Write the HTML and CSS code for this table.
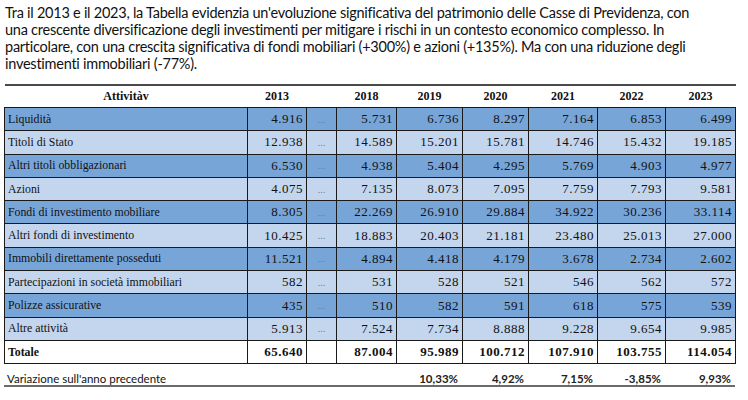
FILE: index.html
```html
<!DOCTYPE html>
<html lang="it">
<head>
<meta charset="utf-8">
<title>Casse di Previdenza</title>
<link rel="stylesheet" href="styles.css">
</head>
<body>
<div class="page">
  <p class="intro">Tra il 2013 e il 2023, la Tabella evidenzia un'evoluzione significativa del patrimonio delle Casse di Previdenza, con una crescente diversificazione degli investimenti per mitigare i rischi in un contesto economico complesso. In particolare, con una crescita significativa di fondi mobiliari (+300%) e azioni (+135%). Ma con una riduzione degli investimenti immobiliari (-77%).</p>
  <table class="data">
    <colgroup>
      <col class="c-label"><col class="c-2013"><col class="c-dots"><col class="c-2018"><col class="c-2019"><col class="c-2020"><col class="c-2021"><col class="c-2022"><col class="c-2023">
    </colgroup>
    <thead>
      <tr><th>Attivitàv</th><th>2013</th><th></th><th>2018</th><th>2019</th><th>2020</th><th>2021</th><th>2022</th><th>2023</th></tr>
    </thead>
    <tbody>
      <tr class="dark"><td>Liquidità</td><td>4.916</td><td class="dots">...</td><td>5.731</td><td>6.736</td><td>8.297</td><td>7.164</td><td>6.853</td><td>6.499</td></tr>
      <tr class="light"><td>Titoli di Stato</td><td>12.938</td><td class="dots">...</td><td>14.589</td><td>15.201</td><td>15.781</td><td>14.746</td><td>15.432</td><td>19.185</td></tr>
      <tr class="dark"><td>Altri titoli obbligazionari</td><td>6.530</td><td class="dots">...</td><td>4.938</td><td>5.404</td><td>4.295</td><td>5.769</td><td>4.903</td><td>4.977</td></tr>
      <tr class="light"><td>Azioni</td><td>4.075</td><td class="dots">...</td><td>7.135</td><td>8.073</td><td>7.095</td><td>7.759</td><td>7.793</td><td>9.581</td></tr>
      <tr class="dark"><td>Fondi di investimento mobiliare</td><td>8.305</td><td class="dots">...</td><td>22.269</td><td>26.910</td><td>29.884</td><td>34.922</td><td>30.236</td><td>33.114</td></tr>
      <tr class="light"><td>Altri fondi di investimento</td><td>10.425</td><td class="dots">...</td><td>18.883</td><td>20.403</td><td>21.181</td><td>23.480</td><td>25.013</td><td>27.000</td></tr>
      <tr class="dark"><td>Immobili direttamente posseduti</td><td>11.521</td><td class="dots">...</td><td>4.894</td><td>4.418</td><td>4.179</td><td>3.678</td><td>2.734</td><td>2.602</td></tr>
      <tr class="light"><td>Partecipazioni in società immobiliari</td><td>582</td><td class="dots">...</td><td>531</td><td>528</td><td>521</td><td>546</td><td>562</td><td>572</td></tr>
      <tr class="dark"><td>Polizze assicurative</td><td>435</td><td class="dots">...</td><td>510</td><td>582</td><td>591</td><td>618</td><td>575</td><td>539</td></tr>
      <tr class="light"><td>Altre attività</td><td>5.913</td><td class="dots">...</td><td>7.524</td><td>7.734</td><td>8.888</td><td>9.228</td><td>9.654</td><td>9.985</td></tr>
      <tr class="total"><td>Totale</td><td>65.640</td><td class="dots"></td><td>87.004</td><td>95.989</td><td>100.712</td><td>107.910</td><td>103.755</td><td>114.054</td></tr>
    </tbody>
  </table>
  <table class="variation">
    <colgroup>
      <col class="c-label"><col class="c-2013"><col class="c-dots"><col class="c-2018"><col class="c-2019"><col class="c-2020"><col class="c-2021"><col class="c-2022"><col class="c-2023">
    </colgroup>
    <tr><td colspan="4" class="var-label">Variazione sull'anno precedente</td><td>10,33%</td><td>4,92%</td><td>7,15%</td><td>-3,85%</td><td>9,93%</td></tr>
  </table>
</div>
</body>
</html>
```
FILE: styles.css
```css
html, body {
  margin: 0;
  padding: 0;
  background: #ffffff;
}

.page {
  width: 748px;
  height: 400px;
  overflow: hidden;
  padding: 4px 0 0 4px;
  box-sizing: border-box;
}

.intro {
  margin: 0 0 0 1px;
  width: 705px;
  font-family: Lato, "Liberation Sans", Arial, sans-serif;
  font-size: 14.5px;
  letter-spacing: -0.25px;
  line-height: 17px;
  color: #111;
}

.data {
  margin-top: 12px;
  border-collapse: collapse;
  table-layout: fixed;
  width: 731px;
  font-family: "Liberation Serif", "Times New Roman", serif;
  font-size: 11px;
  color: #111;
}

.c-label { width: 243px; }
.c-2013 { width: 59px; }
.c-dots { width: 30px; }
.c-2018 { width: 60px; }
.c-2019 { width: 66px; }
.c-2020 { width: 66px; }
.c-2021 { width: 69px; }
.c-2022 { width: 68px; }
.c-2023 { width: 70px; }

.data thead th {
  height: 21px;
  padding: 0;
  border-top: 2px solid #4a4a4a;
  font-weight: bold;
  text-align: center;
  font-size: 12px;
  color: #111;
}

.data tbody td {
  height: 22.3px;
  padding: 0 3px 0 4px;
  border: 1px solid #1a1a1a;
  text-align: right;
  white-space: nowrap;
  font-size: 13px;
  letter-spacing: 0.5px;
}

.data tbody td:first-child {
  text-align: left;
  padding-left: 3px;
  font-size: 11.8px;
  letter-spacing: 0;
}

.data tbody td.dots {
  text-align: center;
  color: #6f7f95;
  font-size: 10px;
  letter-spacing: 0;
  padding: 0;
}

.dark td { background: #78a5d8; }
.light td { background: #c3d6ee; }

.total td {
  background: #ffffff;
  font-weight: bold;
  border-bottom: 2px solid #4a4a4a;
}

.variation {
  margin-top: 8px;
  border-collapse: collapse;
  table-layout: fixed;
  width: 731px;
  font-family: Lato, "Liberation Sans", Arial, sans-serif;
  font-size: 11.5px;
  font-weight: bold;
  color: #222;
}

.variation td {
  padding: 0 4px 0 0;
  height: 13px;
  line-height: 13px;
  text-align: right;
  border-bottom: 2px solid #6a6a6a;
}

.variation td.var-label {
  text-align: left;
  padding-left: 3px;
  font-weight: normal;
  color: #111;
}
```
